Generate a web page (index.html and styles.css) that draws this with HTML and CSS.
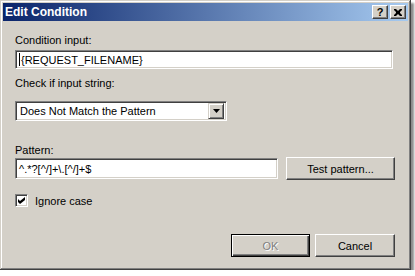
FILE: index.html
```html
<!DOCTYPE html>
<html>
<head>
    <title>Edit Condition</title>
    <link rel="stylesheet" href="styles.css">
</head>
<body>
    <div class="window">
        <div class="titlebar">
            <span class="title">Edit Condition</span>
            <div class="title-buttons">
                <div class="title-btn help">?</div>
                <div class="title-btn">
                    <svg width="8" height="7" viewBox="0 0 8 7">
                        <path d="M0 0h2l2 2l2-2h2v1l-2 2v1l2 2v1h-2l-2-2l-2 2h-2v-1l2-2v-1l-2-2z" fill="#000"/>
                    </svg>
                </div>
            </div>
        </div>

        <div class="content">
            <div class="label first">Condition input:</div>
            <div class="field wide"><span class="caret"></span>{REQUEST_FILENAME}</div>

            <div class="label second">Check if input string:</div>
            <div class="field select">
                <span class="select-text">Does Not Match the Pattern</span>
                <div class="drop-btn">
                    <svg width="7" height="4" viewBox="0 0 7 4"><path d="M0 0h7l-3.5 4z" fill="#000"/></svg>
                </div>
            </div>

            <div class="label third">Pattern:</div>
            <div class="pattern-row">
                <div class="field pattern">^.*?[^/]+\.[^/]+$</div>
                <div class="button test-btn">Test pattern...</div>
            </div>

            <div class="check-row">
                <div class="checkbox">
                    <svg width="7" height="7" viewBox="0 0 7 7"><path d="M0 2l2 2l5-4v3l-5 4l-2-2z" fill="#000"/></svg>
                </div>
                <span class="check-label">Ignore case</span>
            </div>

            <div class="dialog-buttons">
                <div class="button default disabled">OK</div>
                <div class="button cancel">Cancel</div>
            </div>
        </div>
    </div>
</body>
</html>
```

FILE: styles.css
```css
body {
    margin: 0;
    background: #fff;
    font-family: "Liberation Sans", Arial, sans-serif;
    font-size: 11px;
    color: #000;
}
.window {
    width: 411px;
    height: 270px;
    box-sizing: border-box;
    padding: 3px;
    background: #d4d0c8;
    box-shadow: inset -1px -1px #404040, inset 1px 1px #d4d0c8,
                inset -2px -2px #808080, inset 2px 2px #fff,
                3px 3px 2px rgba(0,0,0,0.45);
}
.titlebar {
    height: 18px;
    display: flex;
    align-items: center;
    justify-content: space-between;
    padding: 0 2px;
    background: linear-gradient(to right, #0a246a, #a6caf0);
}
.title {
    color: #fff;
    font-weight: bold;
    font-size: 12px;
}
.title-buttons {
    display: flex;
    gap: 2px;
}
.title-btn {
    width: 16px;
    height: 14px;
    box-sizing: border-box;
    display: flex;
    align-items: center;
    justify-content: center;
    background: #d4d0c8;
    border: 1px solid;
    border-color: #fff #404040 #404040 #fff;
    box-shadow: inset -1px -1px #808080;
}
.title-btn.help {
    font-weight: bold;
    font-size: 11px;
    line-height: 12px;
}
.content {
    padding: 13px 13px 0 12px;
}
.label {
    line-height: 13px;
}
.label.second {
    margin-top: 8px;
}
.label.third {
    margin-top: 23px;
}
.field {
    background: #fff;
    box-sizing: border-box;
    border: 1px solid;
    border-color: #808080 #fff #fff #808080;
    box-shadow: inset 1px 1px #404040, inset -1px -1px #d4d0c8;
    display: flex;
    align-items: center;
    padding-left: 3px;
}
.wide {
    margin-top: 3px;
    width: 378px;
    height: 19px;
}
.caret {
    width: 1px;
    height: 13px;
    background: #000;
    margin-right: 1px;
}
.select {
    margin-top: 11px;
    width: 212px;
    height: 20px;
    padding: 2px;
    padding-left: 4px;
    justify-content: space-between;
}
.drop-btn {
    width: 16px;
    height: 16px;
    box-sizing: border-box;
    display: flex;
    align-items: center;
    justify-content: center;
    background: #d4d0c8;
    border: 1px solid;
    border-color: #d4d0c8 #404040 #404040 #d4d0c8;
    box-shadow: inset 1px 1px #fff, inset -1px -1px #808080;
}
.pattern-row {
    display: flex;
    align-items: center;
    gap: 8px;
    margin-top: 0;
}
.pattern {
    width: 263px;
    height: 21px;
}
.button {
    box-sizing: border-box;
    display: flex;
    align-items: center;
    justify-content: center;
    background: #d4d0c8;
    border: 1px solid;
    border-color: #fff #404040 #404040 #fff;
    box-shadow: inset -1px -1px #808080;
}
.test-btn {
    width: 109px;
    height: 23px;
}
.check-row {
    display: flex;
    align-items: center;
    gap: 7px;
    margin-top: 14px;
    height: 13px;
}
.checkbox {
    width: 13px;
    height: 13px;
    box-sizing: border-box;
    background: #fff;
    border: 1px solid;
    border-color: #808080 #fff #fff #808080;
    box-shadow: inset 1px 1px #404040, inset -1px -1px #d4d0c8;
    display: flex;
    align-items: center;
    justify-content: center;
}
.dialog-buttons {
    display: flex;
    justify-content: flex-end;
    gap: 5px;
    margin-top: 27px;
}
.dialog-buttons .button {
    width: 80px;
    height: 23px;
}
.button.default {
    width: 79px;
    border-color: #000;
    box-shadow: inset 1px 1px #fff, inset -1px -1px #404040, inset -2px -2px #808080;
}
.button.disabled {
    color: #808080;
    text-shadow: 1px 1px #fff;
}
```
